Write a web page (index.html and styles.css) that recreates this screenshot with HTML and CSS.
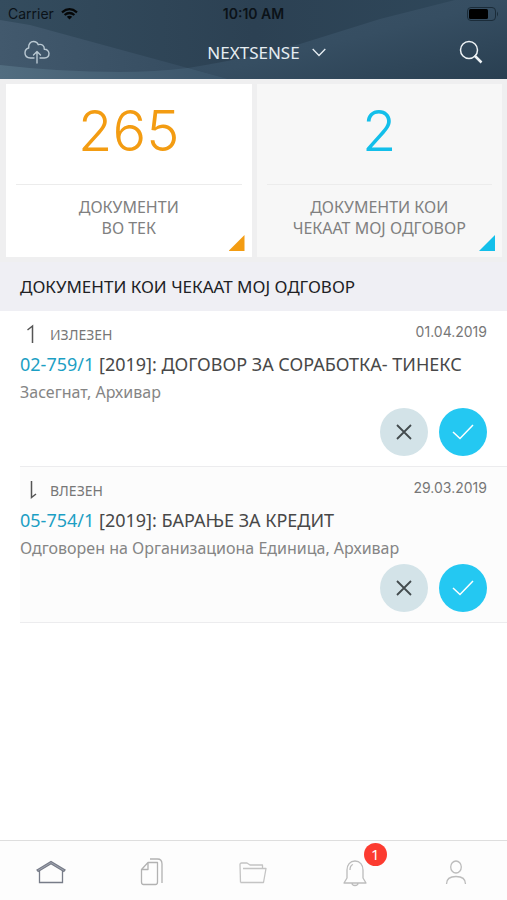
FILE: index.html
```html
<!DOCTYPE html>
<html lang="mk">
<head>
<meta charset="utf-8">
<meta name="viewport" content="width=device-width, initial-scale=1">
<title>Nextsense</title>
<link rel="stylesheet" href="styles.css">
</head>
<body>
<header class="header">
  <svg class="header-bg" viewBox="0 0 507 79" preserveAspectRatio="none" aria-hidden="true">
    <defs>
      <linearGradient id="base" x1="0" y1="0" x2="1" y2="0"><stop offset="0" stop-color="#344c5e"/><stop offset=".5" stop-color="#2c4153"/><stop offset="1" stop-color="#2f485b"/></linearGradient>
      <linearGradient id="left" x1="0" y1="0" x2="1" y2="0"><stop offset="0" stop-color="#42596d"/><stop offset="1" stop-color="#334a5e"/></linearGradient>
      <linearGradient id="right" x1="0" y1="0" x2="1" y2="1"><stop offset="0" stop-color="#3b5266"/><stop offset=".5" stop-color="#364e62"/><stop offset="1" stop-color="#293f51"/></linearGradient>
      <linearGradient id="low" x1="0" y1="0" x2="1" y2="0"><stop offset="0" stop-color="#526d80"/><stop offset="1" stop-color="#3a5469"/></linearGradient>
    </defs>
    <rect width="507" height="79" fill="url(#base)"/>
    <path d="M0 20 30 25 228 79H0Z" fill="url(#left)"/>
    <path d="M188 68Q250 58 300 44L380 19 455 0H507V79H228Z" fill="url(#right)"/>
    <path d="M0 65Q60 72 120 72 155 72 188 68L228 79H0Z" fill="url(#low)"/>
  </svg>
  <div class="status">
    <span class="carrier">Carrier
      <svg width="17" height="12" viewBox="0 0 17 12" fill="none" stroke="#050708" stroke-width="2.2" aria-hidden="true"><path d="M1 4.3Q8.500-2 16 4.300M3.600 7Q8.500 3 13.400 7"/><path d="M8.500 11.500 5.800 8.800Q8.500 6.800 11.200 8.800Z" fill="#050708" stroke="none"/></svg>
    </span>
    <time class="clock">10:10 AM</time>
    <svg class="battery" width="32" height="14" viewBox="0 0 32 14" aria-hidden="true"><rect x=".5" y=".5" width="28" height="13" rx="3.500" fill="none" stroke="#1b2c39"/><rect x="2" y="2" width="19" height="10" rx="1.500" fill="#000"/><path d="M30 4.500Q32 7 30 9.500Z" fill="#1b2c39"/></svg>
  </div>
  <div class="navbar">
    <button class="icon-button" aria-label="Upload">
      <svg width="26" height="24" viewBox="0 0 26 24" fill="none" stroke="#b9c8d2" stroke-width="1.400" stroke-linecap="round" stroke-linejoin="round"><path d="M10 18H6.500C3 18 1 15.800 1 13 1 10.400 2.500 8.500 4.700 8 4.300 4 6.500 1.500 9.500 1.500c2.300 0 4 1.200 4.700 3.200 3.700-1.200 6.400 1.300 6.100 4.600C23 9.200 25 11.200 25 13.600 25 16.200 23.200 18 20.500 18H16M13 23V11.500M9.500 15 13 11.500 16.500 15"/></svg>
    </button>
    <button class="company">NEXTSENSE
      <svg width="14" height="9" viewBox="0 0 14 9" fill="none" stroke="#e6edf2" stroke-width="1.300"><path d="M.7 1 7 7.500 13.300 1"/></svg>
    </button>
    <button class="icon-button" aria-label="Search">
      <svg width="24" height="24" viewBox="0 0 24 24" fill="none" stroke="#eef3f6"><circle cx="10" cy="10" r="8.500" stroke-width="1.500"/><path d="M15.500 15.500 22.500 22.500" stroke-width="2.500"/></svg>
    </button>
  </div>
</header>

<main class="content">
  <div class="cards">
    <a class="card card-progress" href="#progress">
      <span class="count">265</span>
      <span class="caption">ДОКУМЕНТИ<br>ВО ТЕК</span>
    </a>
    <a class="card card-waiting" href="#waiting">
      <span class="count">2</span>
      <span class="caption">ДОКУМЕНТИ КОИ<br>ЧЕКААТ МОЈ ОДГОВОР</span>
    </a>
  </div>
  <h1 class="section-title">ДОКУМЕНТИ КОИ ЧЕКААТ МОЈ ОДГОВОР</h1>
  <ul class="documents" id="waiting">
    <li class="document">
      <div class="meta">
        <svg width="22" height="20" viewBox="0 0 22 20" fill="none" stroke="#555" stroke-width="1.500" aria-hidden="true"><path d="M12.500 19V2L7.500 6"/></svg>
        <span class="kind">ИЗЛЕЗЕН</span>
        <time class="date">01.04.2019</time>
      </div>
      <h2 class="title"><a href="#02-759">02-759/1</a> [2019]: ДОГОВОР ЗА СОРАБОТКА- ТИНЕКС</h2>
      <p class="people">Засегнат, Архивар</p>
      <div class="actions">
        <button class="action reject" aria-label="Одбиј"><svg width="16" height="16" viewBox="0 0 16 16" fill="none" stroke="#434b4e" stroke-width="1.800"><path d="M1 1 15 15M15 1 1 15"/></svg></button>
        <button class="action accept" aria-label="Одобри"><svg width="22" height="16" viewBox="0 0 22 16" fill="none" stroke="#fff" stroke-width="1.500"><path d="M1 8 8 14.500 21 1"/></svg></button>
      </div>
    </li>
    <li class="document incoming">
      <div class="meta">
        <svg width="22" height="20" viewBox="0 0 22 20" fill="none" stroke="#555" stroke-width="1.500" aria-hidden="true"><path d="M11.500 1V17.500L16 14"/></svg>
        <span class="kind">ВЛЕЗЕН</span>
        <time class="date">29.03.2019</time>
      </div>
      <h2 class="title"><a href="#05-754">05-754/1</a> [2019]: БАРАЊЕ ЗА КРЕДИТ</h2>
      <p class="people">Одговорен на Организациона Единица, Архивар</p>
      <div class="actions">
        <button class="action reject" aria-label="Одбиј"><svg width="16" height="16" viewBox="0 0 16 16" fill="none" stroke="#434b4e" stroke-width="1.800"><path d="M1 1 15 15M15 1 1 15"/></svg></button>
        <button class="action accept" aria-label="Одобри"><svg width="22" height="16" viewBox="0 0 22 16" fill="none" stroke="#fff" stroke-width="1.500"><path d="M1 8 8 14.500 21 1"/></svg></button>
      </div>
    </li>
  </ul>
</main>

<nav class="tabs">
  <a class="tab" href="#home" aria-label="Home">
    <svg width="30" height="30" viewBox="0 0 30 30" fill="none" stroke="#777c88" stroke-width="1.300"><path d="M3.500 13V25.500H26.500V13"/><path d="M1 13 15 4.500 29 13 27.800 14.500 15 6.800 2.200 14.500Z" fill="#a9adba"/></svg>
  </a>
  <a class="tab" href="#documents" aria-label="Documents">
    <svg width="30" height="30" viewBox="0 0 30 30" fill="none" stroke="#b2b2b2" stroke-width="1.300" stroke-linejoin="round"><path d="M11 5.500H20.500V25Q20.500 27.500 18.500 27.500H6.500Q4.500 27.500 4.500 25V12.500ZM11 5.500V12.500H4.500M13 2H20.500Q25 2 25 7V26"/></svg>
  </a>
  <a class="tab" href="#folders" aria-label="Folders">
    <svg width="30" height="30" viewBox="0 0 30 30" fill="none" stroke="#c4c4c4" stroke-width="1.300" stroke-linejoin="round"><path d="M2.500 25.500 2 7.500Q2 6 3.500 6H9L12 8H24.500V11.500M5 11.500H28L25.500 25.500H2.500"/></svg>
  </a>
  <a class="tab" href="#notifications" aria-label="Notifications">
    <span class="bell">
      <svg width="30" height="30" viewBox="0 0 30 30" fill="none" stroke="#bcbcbc" stroke-width="1.300" stroke-linejoin="round"><path d="M4 26 7 21V13C7 8 10 4 15 4S23 8 23 13V21L26 26ZM12 26Q12 28.500 15 28.500T18 26M10 13Q10 8.500 13 7.500"/></svg>
      <span class="badge">1</span>
    </span>
  </a>
  <a class="tab" href="#profile" aria-label="Profile">
    <svg width="30" height="30" viewBox="0 0 30 30" fill="none" stroke="#bcbcbc" stroke-width="1.300"><ellipse cx="15" cy="10" rx="5.300" ry="6"/><path d="M5.500 27Q5.500 19.500 15 19.500T24.500 27"/></svg>
  </a>
</nav>
</body>
</html>
```
FILE: styles.css
```css
* { box-sizing: border-box; }

body {
  margin: 0;
  min-height: 100vh;
  display: flex;
  flex-direction: column;
  background: #fff;
  color: #444;
  font-family: "Noto Sans", "Open Sans", sans-serif;
}

button {
  border: 0;
  padding: 0;
  background: none;
  color: inherit;
  font: inherit;
}

a { color: inherit; text-decoration: none; }
svg { display: block; }

.header {
  position: relative;
  padding-bottom: 3px;
  overflow: hidden;
}

.header-bg {
  position: absolute;
  inset: 0;
  width: 100%;
  height: 100%;
}

.status, .navbar {
  position: relative;
  display: grid;
  grid-template-columns: 1fr auto 1fr;
  align-items: center;
}

.status {
  height: 28px;
  padding: 0 8px;
  color: #0b1218;
  font: 14px/28px Inter, sans-serif;
}

.carrier { display: flex; align-items: center; gap: 7px; }
.clock { font-weight: 600; }
.battery { justify-self: end; }

.navbar {
  height: 48px;
  padding: 0 24px;
}

.icon-button:last-child { justify-self: end; }

.company {
  display: flex;
  align-items: center;
  gap: 12px;
  padding-left: 26px;
  color: #e6edf2;
  font-size: 17px;
}

.content { flex: 1; }

.cards {
  display: grid;
  grid-template-columns: 1fr 1fr;
  gap: 5px;
  padding: 5px 5px 5px 6px;
  background: #efeff0;
}

.card {
  position: relative;
  padding: 12px 10px 18px;
  background: #fff;
  text-align: center;
}

.card::after {
  content: "";
  position: absolute;
  right: 7px;
  bottom: 6px;
  width: 16px;
  height: 16px;
  background: currentColor;
  clip-path: polygon(100% 0, 100% 100%, 0 100%);
}

.card-progress { color: #f39c12; }
.card-waiting { color: #13bfea; background: #f7f7f7; }

.count {
  display: block;
  height: 89px;
  border-bottom: 1px solid #ececec;
  font: 300 56px/70px Inter, sans-serif;
}

.caption {
  display: block;
  padding-top: 12px;
  color: #808080;
  font-size: 16px;
  line-height: 21px;
}

.section-title {
  margin: 0;
  padding: 1px 20px 0;
  background: #efeff4;
  color: #202124;
  font-size: 17px;
  font-weight: 400;
  line-height: 48px;
}

.documents {
  margin: 0;
  padding: 0 0 0 20px;
  list-style: none;
}

.document {
  padding: 11px 20px 10px 0;
  border-bottom: 1px solid #ececee;
}

.incoming { background: #fcfcfc; }

.meta {
  display: flex;
  align-items: center;
  gap: 8px;
  height: 24px;
  color: #777;
}

.kind { font-size: 14px; }

.date {
  align-self: flex-start;
  margin-left: auto;
  font: 14px/20px Inter, sans-serif;
}

.title {
  margin: 0;
  padding-top: 2px;
  color: #484848;
  font-size: 18px;
  font-weight: 400;
  line-height: 32px;
}

.title a { color: #1c9fc4; }

.people {
  margin: 0;
  color: #858585;
  font-size: 16px;
  line-height: 25px;
}

.actions {
  display: flex;
  justify-content: flex-end;
  gap: 11px;
  padding-top: 3px;
}

.action {
  display: grid;
  place-items: center;
  width: 48px;
  height: 48px;
  border-radius: 50%;
}

.reject { background: #d3e3e8; }
.accept { background: #24c8f2; }

.tabs {
  display: grid;
  grid-template-columns: repeat(5, 1fr);
  height: 60px;
  border-top: 1px solid #dedede;
  background: #fdfdfd;
}

.tab {
  display: flex;
  justify-content: center;
  padding-top: 16px;
}

.bell { position: relative; height: 30px; }

.badge {
  position: absolute;
  left: 24px;
  top: -14px;
  width: 23px;
  height: 23px;
  border-radius: 50%;
  background: #fc3b30;
  color: #fff;
  font-size: 15px;
  line-height: 23px;
  text-align: center;
}
```
